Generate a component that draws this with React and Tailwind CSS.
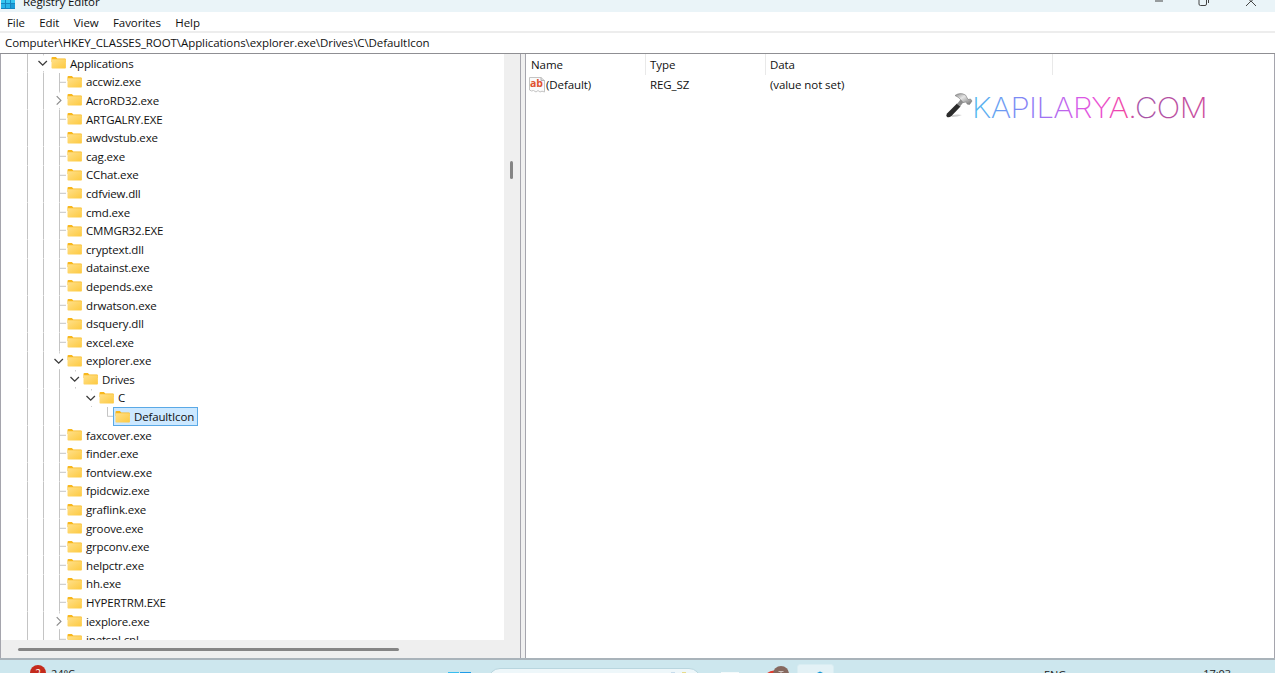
import React from "react";

const tree = [
  { name: "Applications", depth: 0, state: "open" },
  { name: "accwiz.exe", depth: 1 },
  { name: "AcroRD32.exe", depth: 1, state: "closed" },
  { name: "ARTGALRY.EXE", depth: 1 },
  { name: "awdvstub.exe", depth: 1 },
  { name: "cag.exe", depth: 1 },
  { name: "CChat.exe", depth: 1 },
  { name: "cdfview.dll", depth: 1 },
  { name: "cmd.exe", depth: 1 },
  { name: "CMMGR32.EXE", depth: 1 },
  { name: "cryptext.dll", depth: 1 },
  { name: "datainst.exe", depth: 1 },
  { name: "depends.exe", depth: 1 },
  { name: "drwatson.exe", depth: 1 },
  { name: "dsquery.dll", depth: 1 },
  { name: "excel.exe", depth: 1 },
  { name: "explorer.exe", depth: 1, state: "open" },
  { name: "Drives", depth: 2, state: "open" },
  { name: "C", depth: 3, state: "open" },
  { name: "DefaultIcon", depth: 4, selected: true },
  { name: "faxcover.exe", depth: 1 },
  { name: "finder.exe", depth: 1 },
  { name: "fontview.exe", depth: 1 },
  { name: "fpidcwiz.exe", depth: 1 },
  { name: "graflink.exe", depth: 1 },
  { name: "groove.exe", depth: 1 },
  { name: "grpconv.exe", depth: 1 },
  { name: "helpctr.exe", depth: 1 },
  { name: "hh.exe", depth: 1 },
  { name: "HYPERTRM.EXE", depth: 1 },
  { name: "iexplore.exe", depth: 1, state: "closed" },
  { name: "inetspl.cpl", depth: 1 },
];

function Folder() {
  return (
    <svg className="w-4 h-[18px] shrink-0" viewBox="0 0 16 18">
      <defs>
        <linearGradient id="folder" x1="0" y1="0" x2="1" y2="1">
          <stop offset="0" stopColor="#ffe08a" />
          <stop offset="1" stopColor="#fdc93f" />
        </linearGradient>
      </defs>
      <path d="M.5 4q0-1 1-1h3.400l1.400 1.400H14q.8 0 .8.800V8H.5z" fill="#f8b71c" />
      <rect x=".5" y="5.300" width="14.400" height="9.300" rx=".8" fill="url(#folder)" />
    </svg>
  );
}

function Toggle({ state }) {
  return (
    <svg className="w-4 h-[18.6px] shrink-0" viewBox="0 0 16 18.6" fill="none">
      <path d="M8.500 0v1.500M8.500 17v1.600" stroke="#cfcfcf" />
      {state === "open" ? (
        <path d="M3.500 7l4.200 4.200L11.900 7" stroke="#3c3c3c" strokeWidth="1.3" />
      ) : (
        <path d="M5.700 5.200l4.200 4.200-4.200 4.200" stroke="#8c8c8c" strokeWidth="1.2" />
      )}
    </svg>
  );
}

// vertical guide of an ancestor level, with an optional branch to the item
function Guide({ line, branch, last }) {
  return (
    <svg className="w-4 h-[18.6px] shrink-0" viewBox="0 0 16 18.6" stroke="#c4c4c4">
      {line && <path d={last ? "M8.5 0v9.5" : "M8.5 0v18.6"} />}
      {branch && <path d="M8.5 9.3H15" />}
    </svg>
  );
}

function TreeRow({ item }) {
  const { name, depth, state, selected } = item;
  return (
    <div className="flex items-center h-[18.6px] shrink-0">
      <Guide line />
      {depth > 0 && <Guide line />}
      {depth > 1 && <Guide line />}
      {depth > 2 && <Guide />}
      {depth > 3 && <Guide />}
      {state ? <Toggle state={state} /> : <Guide line branch last={selected} />}
      {selected ? (
        <div className="flex items-center h-[19px] w-[85px] -ml-0.5 pl-px bg-[#cce8ff] border border-[#5aa9e6]">
          <Folder />
          <span className="ml-[3px] pt-px">{name}</span>
        </div>
      ) : (
        <>
          <Folder />
          <span className="ml-[3px] pt-px">{name}</span>
        </>
      )}
    </div>
  );
}

function TitleBar() {
  return (
    <div className="flex h-3 shrink-0 bg-[#eaf4f8] overflow-hidden">
      <svg className="w-[15px] h-[9px] ml-px shrink-0" viewBox="0 0 15 9">
        <rect width="14" height="9" fill="#1585c0" />
        <path d="M0 0h4v3H0zM5 0h4v3H5zM10 0h4v3h-4z" fill="#35c5f0" />
        <path d="M0 4h4v4H0zM5 4h4v4H5z" fill="#28b4e8" />
        <path d="M10 4h4v4h-4z" fill="#199bd8" />
      </svg>
      <span className="ml-[7px] -mt-[7px] leading-[18px]">Registry Editor</span>
      <svg className="ml-auto w-[120px] h-3" viewBox="0 0 120 12" fill="none" stroke="#444">
        <path d="M-2 1h10" />
        <path d="M44 0v4q0 1.500 1.500 1.500h4.500q1.500 0 1.500-1.500V0M53.500 0v3" />
        <path d="M91 6l5-5 5 5M94.500 0l1.500 1.500 1.500-1.500" />
      </svg>
    </div>
  );
}

function ValueIcon() {
  return (
    <svg className="w-4 h-4 shrink-0" viewBox="0 0 16 16">
      <path d="M.5.500h11.500l3.500 3v11.500l-2.500-.8-2 .8-2-1.500-2 1.500-2.500-1.500-2 .5-2-1z" fill="#fafafa" stroke="#c4c4c4" />
      <path d="M12 .500v3H15.500" fill="#ddd" stroke="#b5b5b5" />
      <text x="1" y="10" fontSize="10.500" fontWeight="700" fill="#e0512f" fontFamily="Open Sans, sans-serif">ab</text>
    </svg>
  );
}

function Logo() {
  return (
    <svg className="w-[266px] h-9" viewBox="0 0 266 36">
      <defs>
        <linearGradient id="brand" gradientUnits="userSpaceOnUse" x1="30" y1="0" x2="264" y2="0">
          <stop offset="0" stopColor="#4fb9ee" />
          <stop offset=".25" stopColor="#8b7cf6" />
          <stop offset=".45" stopColor="#d45be8" />
          <stop offset=".52" stopColor="#e850d8" />
          <stop offset=".66" stopColor="#f0449e" />
          <stop offset=".71" stopColor="#a455a8" />
          <stop offset="1" stopColor="#cc4a9c" />
        </linearGradient>
        <linearGradient id="steel" x1="0" y1="0" x2="1" y2="1">
          <stop offset="0" stopColor="#8a8a8a" />
          <stop offset=".4" stopColor="#e6e6e6" />
          <stop offset="1" stopColor="#6e6e6e" />
        </linearGradient>
      </defs>
      <path d="M8 28.500q6-1.500 11-.5-4 2-10 2z" fill="#d0d0d0" />
      <path d="M14 16.500l3.500 3L8.500 29q-2.500 2-4.500 1-1.500-1.500 0-3.500z" fill="#2b2b2b" />
      <path d="M18 12l3 2.500-4 5-3-2.500z" fill="#8c8c8c" />
      <path d="M12 8.500q5-3.500 10.500-.5l2.500 4.500 2.500-.5 1.500 2-2.500 3.500-2.500-.5-.5-2-3.500.5-2.500-3q-2-2.500-5.500-4z" fill="url(#steel)" stroke="#777" strokeWidth=".6" />
      <text x="29" y="30.500" textLength="235" lengthAdjust="spacingAndGlyphs" fontSize="28.500" fontWeight="250" letterSpacing="-.6" fill="url(#brand)" fontFamily="Inter, sans-serif">KAPILARYA.COM</text>
    </svg>
  );
}

function Taskbar() {
  return (
    <div className="flex h-[13px] shrink-0 overflow-hidden bg-[#cde7ee] text-[11px] text-[#222]">
      <div className="ml-[30px] mt-[5px] w-4 h-4 shrink-0 rounded-full bg-[#c42b1c] text-white text-center text-[10px] leading-4">2</div>
      <span className="ml-[5px] mt-[6px] w-[397px] shrink-0 leading-4">24°C</span>
      <div className="mt-3 flex gap-px shrink-0">
        <div className="w-[11px] h-3 bg-[#38bdf0]" />
        <div className="w-[11px] h-3 bg-[#1e9be8]" />
      </div>
      <div className="ml-[17px] mt-[8px] w-[213px] h-8 shrink-0 rounded-[12px] border border-[#b9d6df] bg-[#eef7fa]">
        <div className="flex gap-[7px] ml-[182px] mt-[3px]">
          <div className="w-1 h-1 bg-[#c7dcec]" />
          <div className="w-1 h-1 bg-[#e8dc8c]" />
        </div>
      </div>
      <div className="ml-[20px] mt-3 w-[18px] h-4 shrink-0 bg-[#f4fafb]" />
      <svg className="ml-[23px] w-[28px] h-[13px] shrink-0" viewBox="0 0 28 13">
        <circle cx="12" cy="21" r="10.500" fill="#e23b2e" />
        <circle cx="19" cy="14" r="8" fill="#86695f" />
        <path d="M16.500 11.500h5M19 11.500v4" stroke="#cfc4c0" />
      </svg>
      <div className="ml-[7px] mt-1 w-[37px] h-9 shrink-0 rounded-[3px] border border-[#d9edf2] bg-[#e4f2f6]">
        <svg className="ml-[18px] mt-[6px] w-2 h-2" viewBox="0 0 8 8">
          <path d="M1 2l3-1.500L7 2v5H1z" fill="#1695d2" />
        </svg>
      </div>
      <span className="ml-[210px] mt-[7px] leading-4">ENG</span>
      <span className="ml-auto mr-[44px] mt-[6px] leading-4">17:03</span>
    </div>
  );
}

function App() {
  return (
    <div className="w-[1280px] h-[673px] overflow-hidden bg-white">
      <div className="flex flex-col w-[1275px] h-full font-['Open_Sans',sans-serif] text-[11.5px] leading-[18px] tracking-[-0.08px] text-[#111] whitespace-nowrap">
        <TitleBar />
        <div className="flex items-center h-[19px] shrink-0 pl-[7px] pt-[2px] gap-[14.4px]">
          <span>File</span>
          <span>Edit</span>
          <span>View</span>
          <span>Favorites</span>
          <span>Help</span>
        </div>
        <div className="flex items-center h-[23px] shrink-0 pl-[5px] border-t-2 border-[#ededed] border-b border-b-[#8f8f93]">
          Computer\HKEY_CLASSES_ROOT\Applications\explorer.exe\Drives\C\DefaultIcon
        </div>
        <div className="flex h-[604px] shrink-0">
          <div className="flex flex-col w-[521px] border-l border-r border-[#a5a5ad] bg-[#efefef]">
            <div className="flex h-[586px] shrink-0">
              <div className="flex flex-col w-[503px] shrink-0 overflow-hidden bg-white pl-[18px] tracking-[-0.16px]">
                {tree.map((item) => (
                  <TreeRow key={item.name} item={item} />
                ))}
              </div>
              <div className="w-[3px] h-[18px] ml-[6px] mt-[107px] rounded-full bg-[#858585]" />
            </div>
            <div className="w-[381px] h-[3px] ml-[17px] mt-[8px] shrink-0 rounded-full bg-[#858585]" />
          </div>
          <div className="w-1 bg-[#f0f0f0]" />
          <div className="flex flex-1 items-start border-l border-r border-[#a5a5ad]">
            <div className="w-[120px] shrink-0">
              <div className="h-[21px] pl-[5px] pt-[2px] border-r border-[#e9e9e9]">Name</div>
              <div className="flex items-center h-5 pl-[3px]">
                <ValueIcon />
                <span className="ml-px">(Default)</span>
              </div>
            </div>
            <div className="w-[120px] shrink-0">
              <div className="h-[21px] pl-1 pt-[2px] border-r border-[#e9e9e9]">Type</div>
              <div className="h-5 pl-1 pt-px">REG_SZ</div>
            </div>
            <div className="w-[287px] shrink-0">
              <div className="h-[21px] pl-1 pt-[2px] border-r border-[#e9e9e9]">Data</div>
              <div className="h-5 pl-1 pt-px">(value not set)</div>
            </div>
            <div className="-ml-[110px] mt-[33px]">
              <Logo />
            </div>
          </div>
        </div>
        <div className="h-0.5 shrink-0 bg-[#a9b3ba]" />
        <Taskbar />
      </div>
    </div>
  );
}

export default App;
